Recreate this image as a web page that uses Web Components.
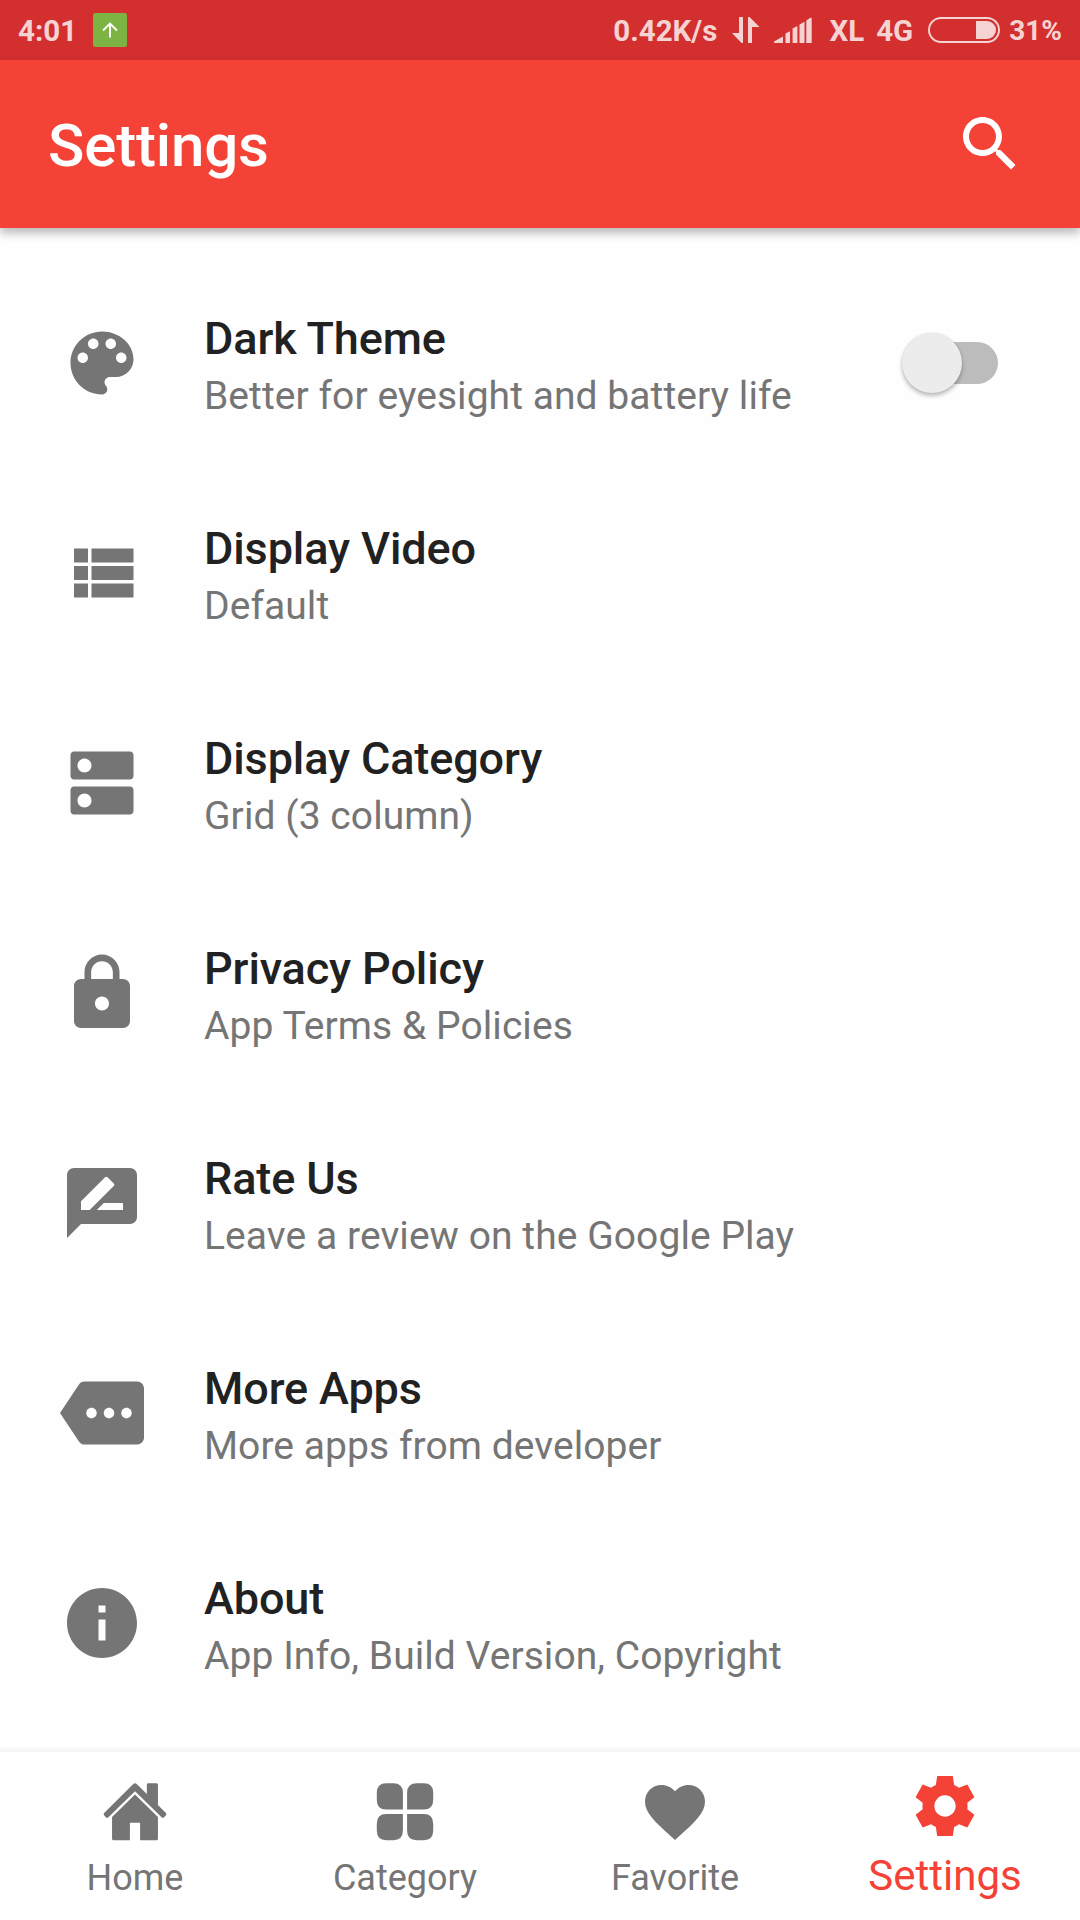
<!DOCTYPE html>
<html lang="en">
<head>
<meta charset="utf-8">
<title>Settings</title>
<style>
  html, body { margin: 0; padding: 0; }
  body { width: 1080px; height: 1920px; overflow: hidden; background: #fefefe;
         font-family: Roboto, "Liberation Sans", sans-serif; }
</style>
</head>
<body>
<settings-screen></settings-screen>

<script>
// All icons share a 24x24 grid
const ICONS = {
  search: '<path d="M15.5 14h-.79l-.28-.27C15.41 12.59 16 11.11 16 9.5 16 5.91 13.09 3 9.5 3S3 5.91 3 9.5 5.91 16 9.5 16c1.61 0 3.09-.59 4.23-1.57l.27.28v.79l5 4.99L20.49 19l-4.99-5zm-6 0C7.01 14 5 11.99 5 9.5S7.01 5 9.5 5 14 7.01 14 9.5 11.99 14 9.5 14z"/>',
  palette: '<path d="M12 3c-4.97 0-9 4.03-9 9s4.03 9 9 9c.83 0 1.5-.67 1.5-1.5 0-.39-.15-.74-.39-1.01-.23-.26-.38-.61-.38-.99 0-.83.67-1.5 1.5-1.5H16c2.76 0 5-2.24 5-5 0-4.42-4.03-8-9-8zm-5.5 9c-.83 0-1.5-.67-1.5-1.5S5.67 9 6.5 9 8 9.67 8 10.5 7.33 12 6.5 12zm3-4C8.67 8 8 7.33 8 6.5S8.67 5 9.5 5s1.5.67 1.5 1.5S10.33 8 9.5 8zm5 0c-.83 0-1.5-.67-1.5-1.5S13.67 5 14.5 5s1.5.67 1.5 1.5S15.33 8 14.5 8zm3 4c-.83 0-1.5-.67-1.5-1.5S16.67 9 17.5 9s1.5.67 1.5 1.5-.67 1.5-1.5 1.5z"/>',
  list: '<path d="M4 14h4v-4H4v4zm0 5h4v-4H4v4zM4 9h4V5H4v4zm5 5h12v-4H9v4zm0 5h12v-4H9v4zM9 5v4h12V5H9z"/>',
  dns: '<path d="M20 13H4c-.55 0-1 .45-1 1v6c0 .55.45 1 1 1h16c.55 0 1-.45 1-1v-6c0-.55-.45-1-1-1zM7 19c-1.1 0-2-.9-2-2s.9-2 2-2 2 .9 2 2-.9 2-2 2zM20 3H4c-.55 0-1 .45-1 1v6c0 .55.45 1 1 1h16c.55 0 1-.45 1-1V4c0-.55-.45-1-1-1zM7 9c-1.1 0-2-.9-2-2s.9-2 2-2 2 .9 2 2-.9 2-2 2z"/>',
  lock: '<path d="M18 8h-1V6c0-2.76-2.24-5-5-5S7 3.24 7 6v2H6c-1.1 0-2 .9-2 2v10c0 1.1.9 2 2 2h12c1.1 0 2-.9 2-2V10c0-1.1-.9-2-2-2zm-6 9c-1.1 0-2-.9-2-2s.9-2 2-2 2 .9 2 2-.9 2-2 2zm3.1-9H8.9V6c0-1.71 1.39-3.1 3.1-3.1s3.1 1.39 3.1 3.1v2z"/>',
  review: '<path d="M20 2H4c-1.1 0-1.99.9-1.99 2L2 22l4-4h14c1.1 0 2-.9 2-2V4c0-1.1-.9-2-2-2zM6 14v-2.47l6.88-6.88c.2-.2.51-.2.71 0l1.77 1.77c.2.2.2.51 0 .71L8.47 14H6zm12 0h-7.5l2-2H18v2z"/>',
  more: '<path d="M22 3H7c-.69 0-1.23.35-1.59.88L0 12l5.41 8.11c.36.53.97.89 1.66.89H22c1.1 0 2-.9 2-2V5c0-1.1-.9-2-2-2zM9 13.5c-.83 0-1.5-.67-1.5-1.5s.67-1.5 1.5-1.5 1.5.67 1.5 1.5-.67 1.5-1.5 1.5zm5 0c-.83 0-1.5-.67-1.5-1.5s.67-1.5 1.5-1.5 1.5.67 1.5 1.5-.67 1.5-1.5 1.5zm5 0c-.83 0-1.5-.67-1.5-1.5s.67-1.5 1.5-1.5 1.5.67 1.5 1.5-.67 1.5-1.5 1.5z"/>',
  info: '<path d="M12 2C6.48 2 2 6.48 2 12s4.48 10 10 10 10-4.48 10-10S17.52 2 12 2zm1 15h-2v-6h2v6zm0-8h-2V7h2v2z"/>',
  home: '<path d="M12 2.45q.35 0 .65.28L15.95 6V2.9q0-.45.45-.45h2.8q.45 0 .45.45v6.8l2.65 2.6q.35.4 0 .8l-.65.7q-.35.3-.7 0L12 5.1 3.05 13.8q-.35.3-.7 0L1.7 13.1q-.35-.4 0-.8l9.65-9.57q.3-.28.65-.28z"/><path d="M12 6.2l7.65 7.45v7.25q0 .5-.5.5H13.7v-5.8h-3.4v5.8H4.85q-.5 0-.5-.5v-7.25z"/>',
  category: '<path d="M5.7 2.4h2.4q3.2 0 3.2 3.2v5.6H5.7q-3.1 0-3.1-3.2V5.600q0-3.2 3.1-3.2zM15.9 2.4h2.4q3.1 0 3.1 3.2V8q0 3.2-3.1 3.2h-5.6V5.6q0-3.2 3.2-3.2zM5.7 12.7h5.6v5.5q0 3.2-3.2 3.2H5.7q-3.1 0-3.1-3.2v-2.3q0-3.2 3.1-3.2zM12.7 12.7h5.6q3.1 0 3.1 3.2v2.3q0 3.2-3.1 3.2h-2.4q-3.2 0-3.2-3.2z"/>',
  heart: '<path d="M12 21.35l-1.45-1.32C5.4 15.36 2 12.28 2 8.5 2 5.42 4.42 3 7.5 3c1.74 0 3.41.81 4.5 2.09C13.09 3.81 14.76 3 16.5 3 19.58 3 22 5.42 22 8.5c0 3.78-3.4 6.86-8.55 11.54L12 21.35z"/>',
  gear: '<path d="M9.4 2h5.2l.45 3q.85.35 1.6.95l2.8-1.1 2.35 4.2-2.35 1.85q.1 1.1 0 2.2l2.35 1.85-2.35 4.2-2.8-1.1q-.75.6-1.6.95l-.45 3H9.4l-.45-3q-.85-.35-1.6-.95l-2.8 1.1-2.35-4.2 2.35-1.85q-.1-1.100 0-2.2L2.2 9.050l2.35-4.2 2.8 1.1q.75-.6 1.6-.95zM12 8.450a3.550 3.550 0 1 0 0 7.100 3.550 3.550 0 0 0 0-7.100z"/>',
};

class AppIcon extends HTMLElement {
  connectedCallback() {
    this.attachShadow({ mode: 'open' });
    this.shadowRoot.innerHTML = `
      <style>
        :host { display: block; flex: none; width: 72px; height: 72px; }
        svg { display: block; width: 100%; height: 100%; fill: currentColor; }
      </style>
      <svg viewBox="0 0 24 24">${ICONS[this.getAttribute('name')]}</svg>
    `;
  }
}
customElements.define('app-icon', AppIcon);

class StatusBar extends HTMLElement {
  connectedCallback() {
    this.attachShadow({ mode: 'open' });
    this.shadowRoot.innerHTML = `
      <style>
        :host { display: flex; align-items: center; height: 60px; box-sizing: border-box;
                padding: 0 18px; background: #d32f2f; color: #f6d3d3;
                font-size: 29.5px; font-weight: 700; white-space: nowrap; }
        span { display: block; padding-top: 2px; height: 60px; box-sizing: border-box; line-height: 58px; }
        svg { display: block; flex: none; }
        .badge { margin-left: 16px; }
        .speed { margin-left: auto; }
        .data { margin-left: 15px; }
        .signal { margin-left: 14px; }
        .carrier { margin-left: 17px; }
        .net { margin-left: 12px; }
        .battery { margin-left: 15px; }
        .level { margin-left: 9px; font-size: 28px; }
      </style>
      <span class="time">4:01</span>
      <svg class="badge" width="34" height="34" viewBox="0 0 34 34">
        <rect width="34" height="34" rx="2.5" fill="#7cb342"/>
        <path d="M17 24.5V10.5M10 17.5l7-7 7 7" fill="none" stroke="#fff" stroke-width="1.9"/>
      </svg>
      <span class="speed">0.42K/s</span>
      <svg class="data" width="28" height="26" viewBox="0 0 28 26" fill="currentColor">
        <path d="M7 0h4v26H9.5L0 16h7zM16 0h1.5l10 10H20v16h-4z"/>
      </svg>
      <svg class="signal" width="38" height="26" viewBox="0 0 38 26" fill="currentColor">
        <path d="M0 26v-1.5l9-5V26zM11.5 26v-9.5l4.500-2.2V26zM18.6 26V11.5l4.8-2.4V26zM25.5 26V7.5l5-2.8V26zM32.3 26V3.5L36 1q1.7-.8 1.7 1v24z"/>
      </svg>
      <span class="carrier">XL</span>
      <span class="net">4G</span>
      <svg class="battery" width="72" height="26" viewBox="0 0 72 26">
        <rect x="1" y="1" width="70" height="24" rx="12" fill="none" stroke="currentColor" stroke-width="1.9"/>
        <path d="M48 4h11a9 9 0 0 1 0 18H48z" fill="currentColor"/>
      </svg>
      <span class="level">31%</span>
    `;
  }
}
customElements.define('status-bar', StatusBar);

class AppBar extends HTMLElement {
  connectedCallback() {
    this.attachShadow({ mode: 'open' });
    this.shadowRoot.innerHTML = `
      <style>
        :host { display: flex; align-items: center; justify-content: space-between; height: 168px;
                box-sizing: border-box; padding: 0 54px 0 48px; background: #f44336; color: #fff;
                box-shadow: 0 5px 9px rgba(0,0,0,.28); z-index: 1; }
        h1 { margin: 0; padding-top: 4px; font-size: 60px; font-weight: 500; line-height: 72px;
             letter-spacing: -.15px; }
      </style>
      <h1><slot></slot></h1>
      <app-icon name="search"></app-icon>
    `;
  }
}
customElements.define('app-bar', AppBar);

class SettingRow extends HTMLElement {
  connectedCallback() {
    this.attachShadow({ mode: 'open' });
    this.shadowRoot.innerHTML = `
      <style>
        :host { display: flex; align-items: center; height: 210px; box-sizing: border-box;
                padding: 0 82px 0 60px; }
        app-icon { width: 84px; height: 84px; color: #757575; margin-right: 60px; }
        .text { flex: 1; white-space: nowrap; padding-top: 10px; }
        .title { color: #212121; font-size: 45px; font-weight: 500; line-height: 56px; letter-spacing: -.12px; }
        .summary { color: #757575; font-size: 39px; line-height: 58px; letter-spacing: .06px; }
      </style>
      <app-icon name="${this.getAttribute('icon')}"></app-icon>
      <div class="text">
        <div class="title">${this.getAttribute('label')}</div>
        <div class="summary"><slot></slot></div>
      </div>
      <slot name="control"></slot>
    `;
  }
}
customElements.define('setting-row', SettingRow);

class ToggleSwitch extends HTMLElement {
  connectedCallback() {
    this.attachShadow({ mode: 'open' });
    this.shadowRoot.innerHTML = `
      <style>
        :host { display: flex; align-items: center; width: 96px; height: 60px; }
        .track { display: flex; align-items: center; width: 90px; height: 42px; margin-left: 6px;
                 border-radius: 21px; background: #bcbcbc; }
        .thumb { flex: none; width: 60px; height: 60px; margin-left: -6px; border-radius: 50%;
                 background: #ececec; box-shadow: 0 3px 4px rgba(0,0,0,.26), 0 0 2px rgba(0,0,0,.12); }
      </style>
      <div class="track"><div class="thumb"></div></div>
    `;
  }
}
customElements.define('toggle-switch', ToggleSwitch);

class NavTab extends HTMLElement {
  connectedCallback() {
    this.attachShadow({ mode: 'open' });
    this.shadowRoot.innerHTML = `
      <style>
        :host { display: flex; flex: 1; flex-direction: column; align-items: center; height: 168px;
                box-sizing: border-box; padding-top: 24px; color: #757575; font-size: 36px; }
        :host([active]) { padding-top: 18px; color: #f44336; font-size: 42px; }
        .label { margin-top: 9px; line-height: 42px; }
        :host([active]) .label { margin-top: 10px; line-height: 48px; }
      </style>
      <app-icon name="${this.getAttribute('icon')}"></app-icon>
      <div class="label"><slot></slot></div>
    `;
  }
}
customElements.define('nav-tab', NavTab);

class BottomNav extends HTMLElement {
  connectedCallback() {
    this.attachShadow({ mode: 'open' });
    this.shadowRoot.innerHTML = `
      <style>
        :host { display: block; }
        .edge { height: 6px; background: linear-gradient(#fefefe, #f3f3f3); }
        .tabs { display: flex; background: #fff; }
      </style>
      <div class="edge"></div>
      <div class="tabs"><slot></slot></div>
    `;
  }
}
customElements.define('bottom-nav', BottomNav);

class SettingsScreen extends HTMLElement {
  connectedCallback() {
    this.attachShadow({ mode: 'open' });
    this.shadowRoot.innerHTML = `
      <style>
        :host { display: flex; flex-direction: column; width: 1080px; height: 1920px; }
        main { flex: 1; min-height: 0; overflow: hidden; padding-top: 30px; }
      </style>
      <status-bar></status-bar>
      <app-bar>Settings</app-bar>
      <main>
        <setting-row icon="palette" label="Dark Theme">Better for eyesight and battery life<toggle-switch slot="control"></toggle-switch></setting-row>
        <setting-row icon="list" label="Display Video">Default</setting-row>
        <setting-row icon="dns" label="Display Category">Grid (3 column)</setting-row>
        <setting-row icon="lock" label="Privacy Policy">App Terms &amp; Policies</setting-row>
        <setting-row icon="review" label="Rate Us">Leave a review on the Google Play</setting-row>
        <setting-row icon="more" label="More Apps">More apps from developer</setting-row>
        <setting-row icon="info" label="About">App Info, Build Version, Copyright</setting-row>
      </main>
      <bottom-nav>
        <nav-tab icon="home">Home</nav-tab>
        <nav-tab icon="category">Category</nav-tab>
        <nav-tab icon="heart">Favorite</nav-tab>
        <nav-tab icon="gear" active>Settings</nav-tab>
      </bottom-nav>
    `;
  }
}
customElements.define('settings-screen', SettingsScreen);
</script>
</body>
</html>
